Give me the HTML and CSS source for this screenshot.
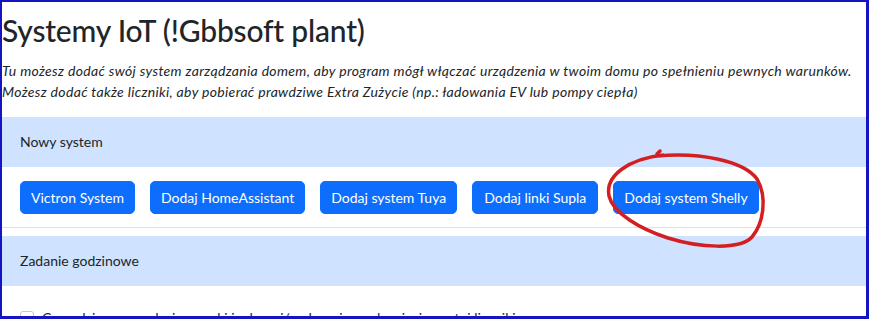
FILE: index.html
```html
<!DOCTYPE html>
<html lang="pl">
<head>
<meta charset="utf-8">
<title>Systemy IoT</title>
<link rel="stylesheet" href="styles.css">
</head>
<body>
<main class="page">
  <h1 class="title">Systemy IoT (!Gbbsoft plant)</h1>
  <p class="intro">Tu możesz dodać swój system zarządzania domem, aby program mógł włączać urządzenia w twoim domu po spełnieniu pewnych warunków.<br>Możesz dodać także liczniki, aby pobierać prawdziwe Extra Zużycie (np.: ładowania EV lub pompy ciepła)</p>

  <section class="card">
    <div class="card-header">Nowy system</div>
    <div class="card-body buttons">
      <button class="btn">Victron System</button>
      <button class="btn">Dodaj HomeAssistant</button>
      <button class="btn">Dodaj system Tuya</button>
      <button class="btn btn-wide">Dodaj linki Supla</button>
      <button class="btn">Dodaj system Shelly</button>
    </div>
  </section>

  <section class="card">
    <div class="card-header">Zadanie godzinowe</div>
    <div class="card-body">
      <label class="form-check"><span class="check"></span><span>Co godzinę sprawdzaj warunki i włączaj/wyłączaj urządzenia, importuj liczniki</span></label>
    </div>
  </section>
</main>
<svg class="annotation" width="869" height="319" viewBox="0 0 869 319" aria-hidden="true">
  <path d="M657 156 C700 152, 744 161, 757 179 C768 198, 763 224, 752 237 C740 250, 700 248, 668 238 C640 229, 613 213, 609 196 C605 176, 628 159, 663 155" fill="none" stroke="#d41f22" stroke-width="3.5" stroke-linecap="round"/>
  <path d="M657 154 L660 151" fill="none" stroke="#d41f22" stroke-width="3.5" stroke-linecap="round"/>
</svg>
</body>
</html>
```

FILE: styles.css
```css
html, body {
  margin: 0;
  padding: 0;
}

body {
  box-sizing: border-box;
  width: 869px;
  height: 319px;
  overflow: hidden;
  background: #ffffff;
  border-style: solid;
  border-color: #1414c2;
  border-width: 2px 3px 3px 2px;
  font-family: "Lato", "Open Sans", sans-serif;
  font-size: 14px;
  line-height: 21px;
  color: #212529;
}

.page {
  display: flex;
  flex-direction: column;
}

.title {
  margin: 9px 0 0 0;
  font-size: 30px;
  line-height: 38px;
  font-weight: 500;
  letter-spacing: -0.2px;
  color: #212529;
}

.intro {
  margin: 11px 0 15px 0;
  font-style: italic;
  letter-spacing: 0.33px;
}

.card {
  border-bottom: 1px solid #dee2e6;
  margin-bottom: 8px;
}

.card-header {
  background: #cfe2ff;
  padding: 14px 18px 15px;
  color: #212529;
}

.card-body {
  padding: 14px 18px 13px;
}

.buttons {
  display: flex;
  gap: 15px;
}

.btn {
  font-family: inherit;
  font-size: 14px;
  line-height: 21px;
  color: #ffffff;
  background: #0d6efd;
  border: 1px solid #0d6efd;
  border-radius: 5px;
  padding: 5px 10px;
  cursor: pointer;
}

.btn-wide {
  padding: 5px 11px;
}

.form-check {
  display: flex;
  align-items: flex-start;
  gap: 8px;
  margin-top: 7px;
}

.check {
  flex: none;
  width: 14px;
  height: 14px;
  margin-top: 4px;
  box-sizing: border-box;
  border: 1px solid #c4c8cc;
  border-radius: 3px;
  background: #fff;
}

.annotation {
  position: fixed;
  top: 0;
  left: 0;
  pointer-events: none;
}
```
